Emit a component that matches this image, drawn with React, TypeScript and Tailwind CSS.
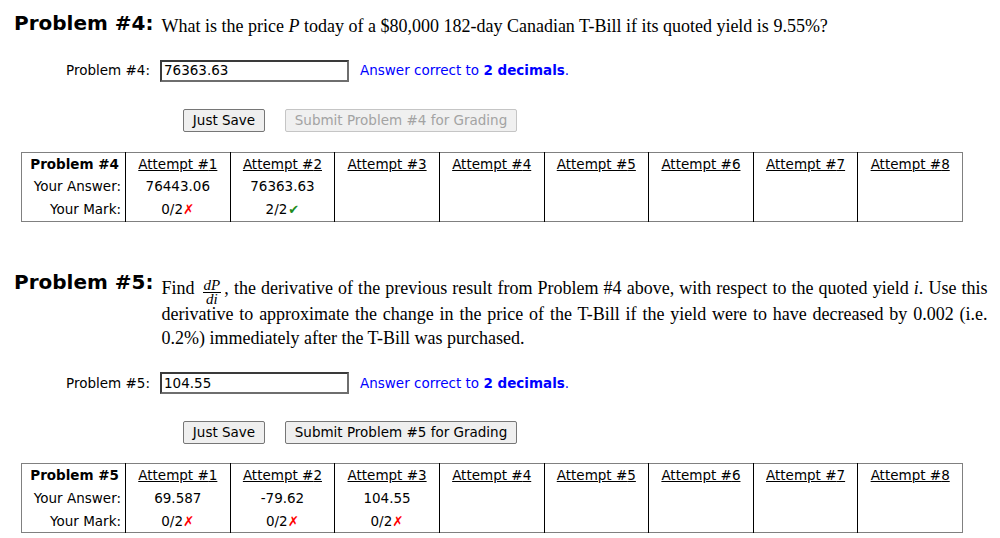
import type { ReactNode } from 'react';

const UI = "font-['DejaVu_Sans','Verdana',sans-serif]";
const SERIF = "font-['Liberation_Serif','Times_New_Roman',serif]";

interface Attempt {
	answer: string;
	mark: string;
	correct: boolean;
}

function Mark({ attempt }: { attempt: Attempt }) {
	return (
		<span>
			{attempt.mark}
			{attempt.correct ? (
				<span className="ml-[1px] text-[13px] text-[#1e8c1e]">✔</span>
			) : (
				<span className="text-[#ff0000]">✗</span>
			)}
		</span>
	);
}

function AttemptsTable({ num, attempts }: { num: number; attempts: Attempt[] }) {
	const cols = [1, 2, 3, 4, 5, 6, 7, 8];
	return (
		<table
			className={`${UI} ml-[21px] w-[942px] table-fixed border-collapse border border-[#808080] text-[13.5px] text-black`}
		>
			<colgroup>
				<col className="w-[104px]" />
				{cols.map((c) => (
					<col key={c} />
				))}
			</colgroup>
			<tbody>
				<tr className="h-[23px]">
					<th className="pr-[6px] text-right font-bold">Problem #{num}</th>
					{cols.map((c) => (
						<td key={c} className="border-l border-black text-center align-middle">
							<span className="underline">Attempt #{c}</span>
						</td>
					))}
				</tr>
				<tr className="h-[23px]">
					<td className="pr-[4px] text-right">Your Answer:</td>
					{cols.map((c) => (
						<td key={c} className="border-l border-black text-center">
							{attempts[c - 1]?.answer ?? ''}
						</td>
					))}
				</tr>
				<tr className="h-[23px]">
					<td className="pr-[4px] text-right">Your Mark:</td>
					{cols.map((c) => (
						<td key={c} className="border-l border-black text-center">
							{attempts[c - 1] ? <Mark attempt={attempts[c - 1]} /> : ''}
						</td>
					))}
				</tr>
			</tbody>
		</table>
	);
}

function AnswerRow({ num, value }: { num: number; value: string }) {
	return (
		<div className={`${UI} flex items-center pl-[66px] text-[13.5px] text-black`}>
			<span className="w-[94px]">Problem #{num}:</span>
			<div className="flex h-[22px] w-[189px] items-center border-2 border-t-[#3a3a3a] border-l-[#3a3a3a] border-b-[#6e6e6e] border-r-[#6e6e6e] bg-white px-[2px]">
				{value}
			</div>
			<span className="ml-[11px] text-[#0000ff]">
				Answer correct to <b>2 decimals</b>.
			</span>
		</div>
	);
}

function Buttons({ num, disabled }: { num: number; disabled: boolean }) {
	return (
		<div className={`${UI} flex gap-[20px] pl-[183px] text-[13.5px]`}>
			<button className="h-[23px] w-[82px] rounded-[2px] border border-[#767676] bg-[#efefef] text-black">
				Just Save
			</button>
			<button
				className={
					disabled
						? 'h-[23px] w-[232px] rounded-[2px] border border-[#c5c5c5] bg-[#f0f0f0] text-[#a3a3a3]'
						: 'h-[23px] w-[232px] rounded-[2px] border border-[#767676] bg-[#efefef] text-black'
				}
			>
				Submit Problem #{num} for Grading
			</button>
		</div>
	);
}

function Heading({ num, top, children }: { num: number; top: string; children: ReactNode }) {
	return (
		<div className="flex items-start pl-[14px]">
			<h2 className={`${UI} shrink-0 text-[20px] font-bold leading-[28px] text-black`}>
				Problem #{num}:
			</h2>
			<div className={`${SERIF} ${top} ml-[8px] text-[18px] leading-[24.5px] text-black`}>
				{children}
			</div>
		</div>
	);
}

function Fraction() {
	return (
		<span className="mx-[3px] inline-flex translate-y-[3px] flex-col items-center align-middle text-[15px] italic leading-[11px]">
			<span className="border-b border-black px-[1px] pb-[1px]">dP</span>
			<span className="pt-[1px]">di</span>
		</span>
	);
}

export default function App() {
	return (
		<div className="w-[1000px] bg-white pt-[9px]">
			<Heading num={4} top="pt-[5px]">
				What is the price <i>P</i> today of a $80,000 182-day Canadian T-Bill if its quoted yield is 9.55%?
			</Heading>
			<div className="mt-[21px]">
				<AnswerRow num={4} value="76363.63" />
			</div>
			<div className="mt-[27px]">
				<Buttons num={4} disabled />
			</div>
			<div className="mt-[20px]">
				<AttemptsTable
					num={4}
					attempts={[
						{ answer: '76443.06', mark: '0/2', correct: false },
						{ answer: '76363.63', mark: '2/2', correct: true },
					]}
				/>
			</div>

			<div className="mt-[46px]">
				<Heading num={5} top="pt-[8px]">
					<p className="w-[826px] text-justify">
						Find <Fraction />, the derivative of the previous result from Problem #4 above, with respect to the quoted yield <i>i</i>. Use this derivative to approximate the change in the price of the T-Bill if the yield were to have decreased by 0.002 (i.e. 0.2%) immediately after the T-Bill was purchased.
					</p>
				</Heading>
			</div>
			<div className="mt-[21px]">
				<AnswerRow num={5} value="104.55" />
			</div>
			<div className="mt-[27px]">
				<Buttons num={5} disabled={false} />
			</div>
			<div className="mt-[19px]">
				<AttemptsTable
					num={5}
					attempts={[
						{ answer: '69.587', mark: '0/2', correct: false },
						{ answer: '-79.62', mark: '0/2', correct: false },
						{ answer: '104.55', mark: '0/2', correct: false },
					]}
				/>
			</div>
		</div>
	);
}
